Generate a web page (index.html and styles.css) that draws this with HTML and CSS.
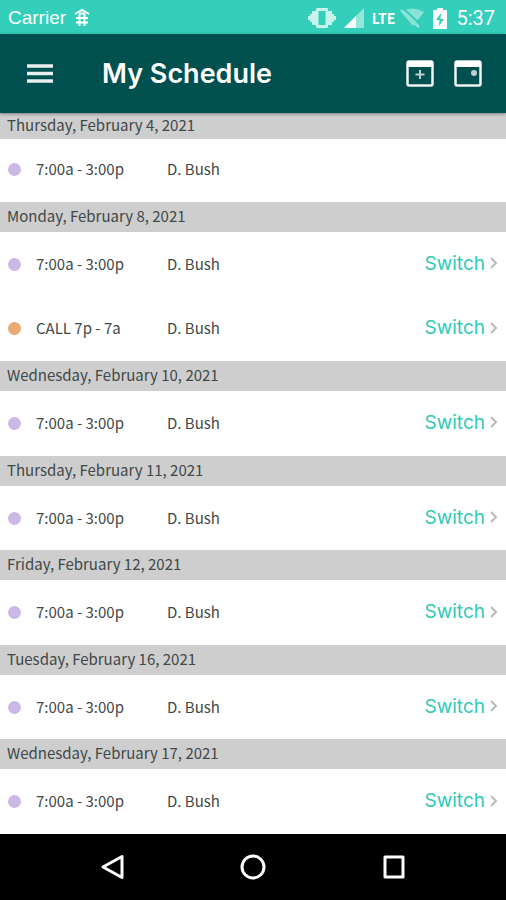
FILE: index.html
```html
<!DOCTYPE html>
<html lang="en">
<head>
<meta charset="utf-8">
<meta name="viewport" content="width=device-width, initial-scale=1">
<title>My Schedule</title>
<link rel="stylesheet" href="styles.css">
</head>
<body>
<div class="status">
  <span class="carrier">Carrier</span>
  <svg class="bug" width="16" height="20" viewBox="0 0 16 20" fill="none" stroke="#fff" stroke-width="2"><path d="M1 6 8 2l7 4M2 10h12M2 14.500h12M5.500 6v12M10.500 6v12"/><path d="M5 5.500h6"/></svg>
  <svg class="vibrate" width="28" height="22" viewBox="0 0 28 22"><path d="M4 4h4V2q0-1 1-1h10q1 0 1 1v2h4v3h2v2h2v4h-2v2h-2v3h-4v2q0 1-1 1H9q-1 0-1-1v-2H4v-3H2v-2H0V9h2V7h2z" fill="#c6f3ea"/><path d="M10.500 4h7v14h-7z" fill="#33cfbb"/></svg>
  <svg class="signal" width="20" height="20" viewBox="0 0 20 20"><path d="M20 0v20H0z" fill="#92e6da"/><path d="M12 8v12H0z" fill="#fff"/></svg>
  <span class="lte">LTE</span>
  <svg class="wifi" width="24" height="20" viewBox="0 0 24 20"><path d="M1 4Q12-3 24 4L13 18z" fill="#8be3d6"/><path d="M3 0 22 18" stroke="#33cfbb" stroke-width="2"/><path d="M1 2 19 19" stroke="#8be3d6" stroke-width="3"/></svg>
  <svg class="battery" width="14" height="21" viewBox="0 0 14 21"><path d="M4 0h6v2h3q1 0 1 1v17q0 1-1 1H1q-1 0-1-1V3q0-1 1-1h3z" fill="#fff"/><path d="M8 5 3 12h3.500L6 18l5-7H7.500z" fill="#33cfbb"/></svg>
  <span class="clock">5:37</span>
</div>
<header class="bar">
  <button class="icon menu" aria-label="Menu"><svg width="26" height="19" viewBox="0 0 26 19" stroke="#e8f0ef" stroke-width="3.500"><path d="M0 2h26M0 9.500h26M0 17h26"/></svg></button>
  <h1>My Schedule</h1>
  <button class="icon" aria-label="Add event"><svg width="28" height="27" viewBox="0 0 28 27"><rect x="1.500" y="1.500" width="25" height="24" rx="1.500" fill="none" stroke="#eef3f2" stroke-width="2.500"/><path d="M1 1h26v6H1z" fill="#fff"/><path d="M14 10v9M9.500 14.500h9" stroke="#bdd2d0" stroke-width="2"/></svg></button>
  <button class="icon" aria-label="Today"><svg width="28" height="27" viewBox="0 0 28 27"><rect x="1.500" y="1.500" width="25" height="24" rx="1.500" fill="none" stroke="#eef3f2" stroke-width="2.500"/><path d="M1 1h26v6H1z" fill="#fff"/><circle cx="20" cy="13" r="3" fill="#bdd2d0"/></svg></button>
</header>
<main class="list">
  <h2 class="first">Thursday, February 4, 2021</h2>
  <div class="row first-row"><i class="dot"></i><span class="time">7:00a - 3:00p</span><span class="name">D. Bush</span></div>
  <h2>Monday, February 8, 2021</h2>
  <div class="row"><i class="dot"></i><span class="time">7:00a - 3:00p</span><span class="name">D. Bush</span><a href="#">Switch<svg class="chev" width="8" height="12" viewBox="0 0 8 12"><path d="m1 1 5 5-5 5"/></svg></a></div>
  <div class="row"><i class="dot call"></i><span class="time">CALL 7p - 7a</span><span class="name">D. Bush</span><a href="#">Switch<svg class="chev" width="8" height="12" viewBox="0 0 8 12"><path d="m1 1 5 5-5 5"/></svg></a></div>
  <h2>Wednesday, February 10, 2021</h2>
  <div class="row"><i class="dot"></i><span class="time">7:00a - 3:00p</span><span class="name">D. Bush</span><a href="#">Switch<svg class="chev" width="8" height="12" viewBox="0 0 8 12"><path d="m1 1 5 5-5 5"/></svg></a></div>
  <h2>Thursday, February 11, 2021</h2>
  <div class="row"><i class="dot"></i><span class="time">7:00a - 3:00p</span><span class="name">D. Bush</span><a href="#">Switch<svg class="chev" width="8" height="12" viewBox="0 0 8 12"><path d="m1 1 5 5-5 5"/></svg></a></div>
  <h2>Friday, February 12, 2021</h2>
  <div class="row"><i class="dot"></i><span class="time">7:00a - 3:00p</span><span class="name">D. Bush</span><a href="#">Switch<svg class="chev" width="8" height="12" viewBox="0 0 8 12"><path d="m1 1 5 5-5 5"/></svg></a></div>
  <h2>Tuesday, February 16, 2021</h2>
  <div class="row"><i class="dot"></i><span class="time">7:00a - 3:00p</span><span class="name">D. Bush</span><a href="#">Switch<svg class="chev" width="8" height="12" viewBox="0 0 8 12"><path d="m1 1 5 5-5 5"/></svg></a></div>
  <h2>Wednesday, February 17, 2021</h2>
  <div class="row"><i class="dot"></i><span class="time">7:00a - 3:00p</span><span class="name">D. Bush</span><a href="#">Switch<svg class="chev" width="8" height="12" viewBox="0 0 8 12"><path d="m1 1 5 5-5 5"/></svg></a></div>
</main>
<nav class="nav" aria-label="System">
  <button class="icon" aria-label="Back"><svg width="26" height="26" viewBox="0 0 26 26"><path d="M23 2.500v21L4 13z"/></svg></button>
  <button class="icon" aria-label="Home"><svg width="26" height="26" viewBox="0 0 26 26"><circle cx="13" cy="13" r="11"/></svg></button>
  <button class="icon" aria-label="Recent apps"><svg width="26" height="26" viewBox="0 0 26 26"><path d="M4 3h18v20H4z"/></svg></button>
</nav>
</body>
</html>
```
FILE: styles.css
```css
* {
  box-sizing: border-box;
}

body {
  margin: 0;
  min-height: 100vh;
  display: flex;
  flex-direction: column;
  background: #fff;
  color: #414848;
  font-family: "Noto Sans CJK SC", sans-serif;
  font-size: 15px;
}

svg {
  display: block;
  flex: none;
}

.status {
  display: flex;
  align-items: center;
  height: 34px;
  padding: 2px 11px 0 8px;
  background: #33cfbb;
  color: #fff;
  font-family: "Liberation Sans", sans-serif;
}

.carrier {
  font-size: 19px;
  line-height: 24px;
}

.bug {
  margin-left: 8px;
}

.vibrate {
  margin-left: auto;
}

.signal {
  margin-left: 8px;
}

.lte {
  margin-left: 8px;
  font: bold 14px "Noto Sans CJK SC", sans-serif;
  line-height: 20px;
}

.wifi {
  margin-left: 5px;
}

.battery {
  margin: 0 9px;
}

.clock {
  font-family: Roboto, sans-serif;
  font-size: 20px;
}

.bar {
  position: relative;
  display: flex;
  align-items: center;
  gap: 20px;
  height: 79px;
  padding: 0 24px 0 27px;
  background: #00504f;
  box-shadow: 0 1px 3px rgba(0, 0, 0, 0.4);
}

.icon {
  padding: 0;
  border: 0;
  background: none;
}

h1 {
  flex: 1;
  margin: 0 0 0 29px;
  color: #fff;
  font: 600 27px Inter, sans-serif;
}

.list {
  flex: 1;
  display: flex;
  flex-direction: column;
}

h2 {
  height: 30px;
  margin: 0;
  padding: 0 7px;
  background: #cecece;
  font-size: 15px;
  font-weight: 400;
  line-height: 28px;
}

.first {
  height: 26px;
  line-height: 24px;
}

.row {
  flex: 1 0 60px;
  display: flex;
  align-items: center;
  padding: 0 8px;
}

.first-row {
  flex: 0 0 63px;
  padding-bottom: 3px;
}

.dot {
  width: 13px;
  height: 13px;
  margin-right: 15px;
  border-radius: 50%;
  background: #cbb8e6;
}

.call {
  background: #eaaa72;
}

.time,
.name {
  padding-bottom: 2px;
}

.time {
  width: 131px;
}

.name {
  flex: 1;
}

a {
  display: flex;
  align-items: center;
  gap: 5px;
  padding-bottom: 2px;
  color: #30cab5;
  font: 19px Inter, sans-serif;
  text-decoration: none;
}

.chev {
  fill: none;
  stroke: #bababa;
  stroke-width: 2;
}

.nav {
  display: flex;
  justify-content: center;
  align-items: center;
  gap: 115px;
  height: 66px;
  background: #000;
}

.nav svg {
  fill: none;
  stroke: #fff;
  stroke-width: 3;
  stroke-linejoin: round;
}
```
